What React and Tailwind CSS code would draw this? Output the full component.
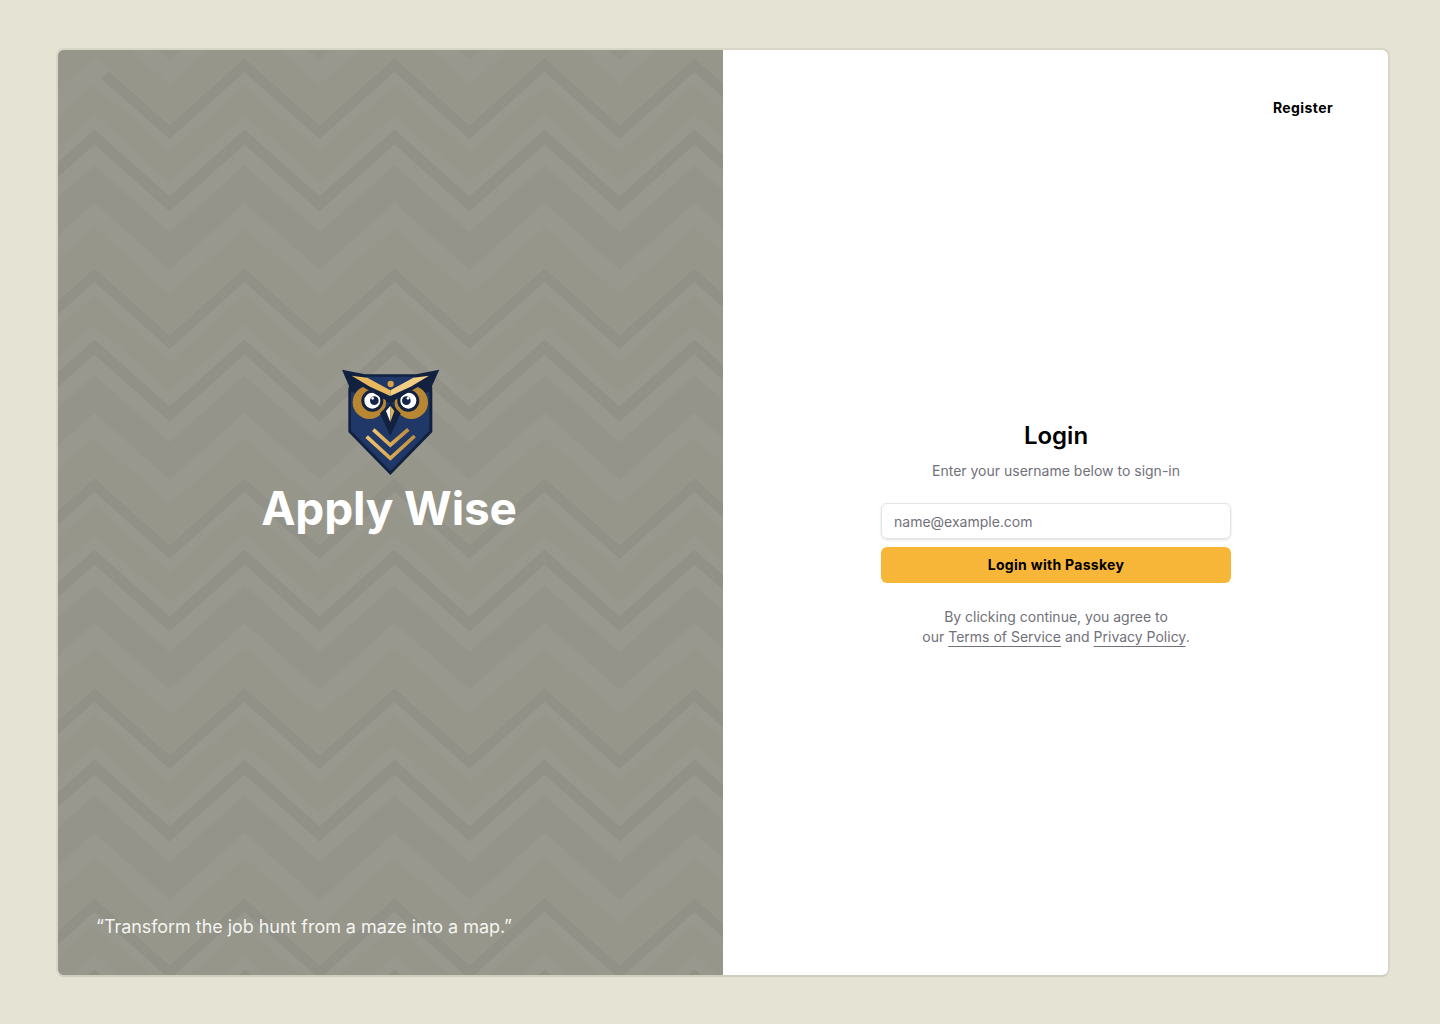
import React from "react";

// offsets of the chevron bands inside one 210px repeat
const bands = [
  { y: 7, w: 14, color: "#919187" },
  { y: 42, w: 30, color: "#96968b" },
  { y: 79, w: 15, color: "#919187" },
  { y: 126, w: 38, color: "#94948a" },
  { y: 189, w: 39, color: "#96968a" },
];

function chevronPoints(y, cut) {
  const pts = [];
  for (let x = -113.5, i = 0; x < 800; x += 75, i++) {
    if (cut && x < 40) continue;
    pts.push(`${x},${i % 2 === 0 ? y : y + 67}`);
  }
  if (cut) pts.unshift(`47,${y + 10}`);
  return pts.join(" ");
}

function Pattern() {
  const rows = [0, 1, 2, 3, 4, 5];
  return (
    <svg
      className="absolute inset-0 h-full w-full"
      viewBox="0 0 665 925"
      aria-hidden="true"
    >
      {rows.map((row) =>
        bands.map((band, index) => {
          const y = 8 + band.y + (row - 1) * 210;
          // the very first band starts inside the panel, the rest run edge to edge
          if (row === 0 && index === 0) return null;
          return (
            <polyline
              key={`${row}-${index}`}
              points={chevronPoints(y, row === 1 && index === 0)}
              fill="none"
              stroke={band.color}
              strokeWidth={band.w * 0.74}
            />
          );
        })
      )}
    </svg>
  );
}

function OwlLogo() {
  return (
    <svg viewBox="30 27 300 318" className="h-[106px] w-[100px]">
      <defs>
        <linearGradient id="gold" x1="0" y1="0" x2="1" y2="0">
          <stop offset="0" stopColor="#f0c46c" />
          <stop offset="1" stopColor="#c28f3c" />
        </linearGradient>
      </defs>
      <path
        d="M36 29 L105 43 H258 L328 29 L306 78 Q307 84 307 92 V216 L181 345 L55 216 V92 Q55 84 57 78 Z"
        fill="#12213f"
      />
      <path d="M63 95 V212 L181 333 L298 212 V95 L181 130 Z" fill="#1f3868" />
      <path d="M105 50 H258 L181 92 Z" fill="#1f3868" />
      <circle cx="118" cy="127" r="50" fill="#b98632" />
      <circle cx="244" cy="127" r="50" fill="#b98632" />
      <circle cx="127" cy="122" r="33" fill="#12213f" />
      <circle cx="235" cy="122" r="33" fill="#12213f" />
      <circle cx="127" cy="122" r="24" fill="#ffffff" />
      <circle cx="235" cy="122" r="24" fill="#ffffff" />
      <circle cx="133" cy="122" r="13" fill="#16264a" />
      <circle cx="229" cy="122" r="13" fill="#16264a" />
      <circle cx="128" cy="115" r="4" fill="#ffffff" />
      <circle cx="234" cy="115" r="4" fill="#ffffff" />
      <path d="M60 42 L181 92 L302 42 L300 56 L258 84 L181 128 L104 84 L62 56 Z" fill="#12213f" />
      <path d="M65 47 L112 53 L181 91 V108 L120 80 Z" fill="#e9b95f" />
      <path d="M297 47 L250 53 L181 91 V108 L242 80 Z" fill="#f3cf85" />
      <path d="M181 128 L212 160 L181 228 L150 160 Z" fill="#12213f" />
      <path d="M181 137 V186 L168 153 Z" fill="#ffffff" />
      <path d="M181 137 V186 L193 153 Z" fill="#e3b25d" />
      <circle cx="182" cy="72" r="9.5" fill="#d9a24a" />
      <path d="M130 209 L181 255 L235 208" fill="none" stroke="url(#gold)" strokeWidth="11" />
      <path d="M110 230 L181 295 L254 228" fill="none" stroke="url(#gold)" strokeWidth="11" />
    </svg>
  );
}

function App() {
  return (
    <div className="min-h-screen bg-[#e5e3d4] pl-[56px] pt-[48px] font-['Inter',sans-serif]">
      <div className="flex h-[929px] w-[1334px] overflow-hidden rounded-lg border-2 border-[#d8d7c7] border-b-[#d0cfbe] bg-white">
        <div className="relative flex w-[665px] flex-col items-center bg-[#98988e]">
          <Pattern />
          <div className="relative mt-[319px] pr-[2px]">
            <OwlLogo />
          </div>
          <h1 className="relative mt-[3px] pr-[3px] text-[46px] font-bold leading-[60px] tracking-[-0.15px] text-white">
            Apply Wise
          </h1>
          <p className="relative mt-[375px] self-start pl-[38px] text-[18px] leading-[28px] tracking-[-0.05px] text-[#f4f4f0]">
            “Transform the job hunt from a maze into a map.”
          </p>
        </div>

        <div className="flex w-[665px] flex-col">
          <div className="flex justify-end pr-[55px] pt-[48px]">
            <a className="text-sm font-bold leading-5 tracking-[0.4px] text-black">
              Register
            </a>
          </div>
          <div className="mt-[302px] flex flex-col items-center pl-px">
            <h2 className="text-2xl font-semibold text-black">Login</h2>
            <p className="mt-[9px] text-sm leading-5 text-[#71717a]">
              Enter your username below to sign-in
            </p>
            <input
              placeholder="name@example.com"
              className="mt-[22px] h-9 w-[350px] rounded-md border border-[#e4e4e7] px-3 text-sm shadow-sm outline-none placeholder:text-[#71717a]"
            />
            <button className="mt-2 h-9 w-[350px] rounded-md bg-[#f7b638] text-sm font-bold tracking-[0.3px] text-black">
              Login with Passkey
            </button>
            <p className="mt-6 text-center text-sm leading-5 text-[#71717a]">
              By clicking continue, you agree to
              <br />
              our{" "}
              <a className="underline underline-offset-4">Terms of Service</a>{" "}
              and{" "}
              <a className="underline underline-offset-4">Privacy Policy</a>.
            </p>
          </div>
        </div>
      </div>
    </div>
  );
}

export default App;
